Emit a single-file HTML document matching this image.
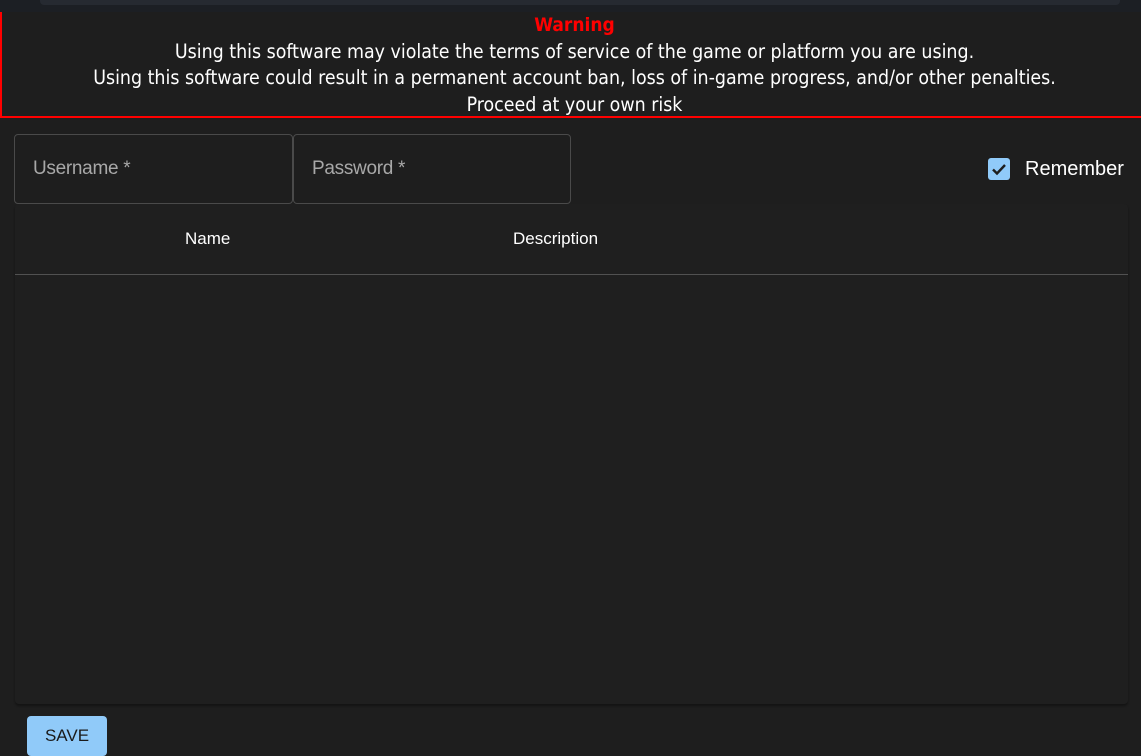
<!DOCTYPE html>
<html><head><meta charset="utf-8"><style>
html,body{margin:0;padding:0;width:1141px;height:748px;overflow:hidden;background:#1e1e1e;font-family:"Liberation Sans",sans-serif;}
.top{position:absolute;left:0;top:0;width:1141px;height:12px;background:#1c1f24;}
.top div{position:absolute;left:40px;top:0;width:1080px;height:5px;background:#262a31;border-radius:0 0 4px 4px;}
.warn{position:absolute;left:0;top:12px;width:1145px;height:104px;border:2px solid #f00;border-top:none;border-right:none;background:#1e1e1e;color:#fff;text-align:center;font-size:19.4px;line-height:26.5px;font-family:"DejaVu Sans Condensed","Liberation Sans",sans-serif;}
.warn b{color:#f00;font-size:19px;}
.inp{position:absolute;top:134px;height:70px;width:279px;border:1px solid #4a4a4a;border-radius:4px;box-sizing:border-box;color:#a8a8a8;font-size:19px;padding:23px 0 0 18px;letter-spacing:-0.3px;}
.chk{position:absolute;left:988px;top:158px;width:22px;height:22px;background:#90caf9;border-radius:3px;}
.rem{position:absolute;left:1025px;top:158px;color:#fff;font-size:20px;}
.tbl{position:absolute;left:15px;top:204px;width:1113px;height:500px;background:#1f1f1f;border-radius:4px;box-shadow:0 2px 2px rgba(0,0,0,.35);}
.th{position:absolute;top:25px;color:#fff;font-size:17px;}
.line{position:absolute;left:0;top:70px;width:1113px;height:1px;background:#515151;}
.save{position:absolute;left:27px;top:716px;width:80px;height:40px;background:#90caf9;border-radius:4px;color:#1a1a1a;font-size:17px;text-align:center;line-height:40px;}
</style></head><body>
<div class="top"><div></div></div>
<div class="warn"><b>Warning</b><br>Using this software may violate the terms of service of the game or platform you are using.<br>Using this software could result in a permanent account ban, loss of in-game progress, and/or other penalties.<br>Proceed at your own risk</div>
<div class="inp" style="left:14px">Username *</div>
<div class="inp" style="left:293px;width:278px">Password *</div>
<div class="chk"><svg width="22" height="22" viewBox="0 0 22 22"><path d="M5 11.5l4 4 8-8.5" stroke="#1e1e1e" stroke-width="2.4" fill="none"/></svg></div>
<div class="rem">Remember</div>
<div class="tbl"><div class="th" style="left:170px">Name</div><div class="th" style="left:498px">Description</div><div class="line"></div></div>
<div class="save">SAVE</div>
</body></html>
